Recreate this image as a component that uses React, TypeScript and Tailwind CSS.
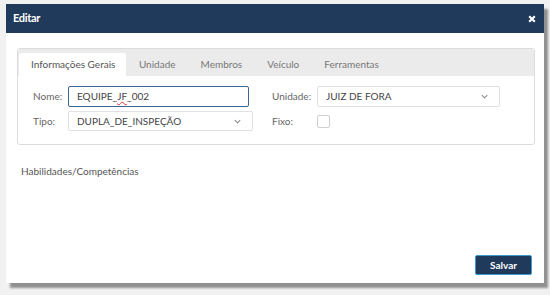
import React from 'react';

function Chevron() {
  return (
    <svg className="w-[9px] h-[9px] text-[#888]" viewBox="0 0 10 10" fill="none" stroke="currentColor" strokeWidth={1.2}>
      <path d="M2 3.5l3 3 3-3" />
    </svg>
  );
}

const tabs = ['Informações Gerais', 'Unidade', 'Membros', 'Veículo', 'Ferramentas'];

export default function App() {
  return (
    <div className="w-[550px] h-[295px] bg-[#f1f1f1] pt-[4px] pl-[6px] overflow-hidden font-['Lato','Noto_Sans',sans-serif]">
      <div className="w-[538px] h-[279px] bg-white flex flex-col shadow-[4px_5px_2px_rgba(0,0,0,0.4)]">
        {/* header */}
        <div className="h-[29px] bg-[#1f3a5a] flex items-center justify-between pl-[7px] pr-[8px]">
          <span className="text-white text-[11px] font-bold tracking-[-0.3px]">Editar</span>
          <svg className="w-[8px] h-[8px] text-white" viewBox="0 0 10 10" stroke="currentColor" strokeWidth={2.6}>
            <path d="M1.5 1.5l7 7M8.5 1.5l-7 7" />
          </svg>
        </div>

        <div className="flex-1 flex flex-col pt-[15px] pl-[11px] pr-[9px] pb-[8px]">
          {/* tab panel */}
          <div className="border border-[#dcdcdc] rounded-[3px] h-[97px] flex flex-col">
            <div className="h-[27px] bg-[#ebebeb] flex items-end pl-[1px] pt-[4px] rounded-t-[3px]">
              {tabs.map((t, i) => (
                <div
                  key={t}
                  className={
                    i === 0
                      ? 'h-[23px] bg-white pl-[12px] pr-[11px] flex items-center text-[10px] text-[#555] rounded-t-[2px]'
                      : 'h-[23px] px-[12.5px] flex items-center text-[10px] text-[#777]'
                  }
                >
                  {t}
                </div>
              ))}
            </div>
            <div className="flex pt-[10px] pl-[15px] text-[10px]">
              {/* left column */}
              <div className="flex flex-col gap-[4px] w-[239px]">
                <div className="flex items-center h-[21px]">
                  <span className="w-[35px] text-[#666]">Nome:</span>
                  <div className="w-[181px] h-[21px] border border-[#3d6690] rounded-[2px] flex items-center px-[8px] text-[#444]">
                    EQUIPE_<span className="underline decoration-wavy decoration-[#e03030] underline-offset-[1px]">JF</span>_002
                  </div>
                </div>
                <div className="flex items-center h-[20px]">
                  <span className="w-[35px] text-[#666]">Tipo:</span>
                  <div className="w-[185px] h-[20px] border border-[#e0e0e0] rounded-[2px] flex items-center justify-between pl-[8px] pr-[10px] text-[#444]">
                    <span>DUPLA_DE_INSPEÇÃO</span>
                    <Chevron />
                  </div>
                </div>
              </div>
              {/* right column */}
              <div className="flex flex-col gap-[4px]">
                <div className="flex items-center h-[21px]">
                  <span className="w-[45px] text-[#666]">Unidade:</span>
                  <div className="w-[183px] h-[21px] border border-[#e0e0e0] rounded-[2px] flex items-center justify-between pl-[8px] pr-[10px] text-[#444]">
                    <span>JUIZ DE FORA</span>
                    <Chevron />
                  </div>
                </div>
                <div className="flex items-center h-[20px]">
                  <span className="w-[45px] text-[#666]">Fixo:</span>
                  <div className="w-[13px] h-[13px] border border-[#cfcfcf] rounded-[2px] bg-white" />
                </div>
              </div>
            </div>
          </div>

          <div className="mt-[19px] pl-[4px] text-[10px] text-[#555]">Habilidades/Competências</div>

          <div className="mt-auto flex justify-end pr-[3px]">
            <button className="w-[57px] h-[20px] bg-[#1f3a5a] border border-[#3a9ad0] rounded-[2px] text-white text-[10px] font-bold">
              Salvar
            </button>
          </div>
        </div>
      </div>
    </div>
  );
}
